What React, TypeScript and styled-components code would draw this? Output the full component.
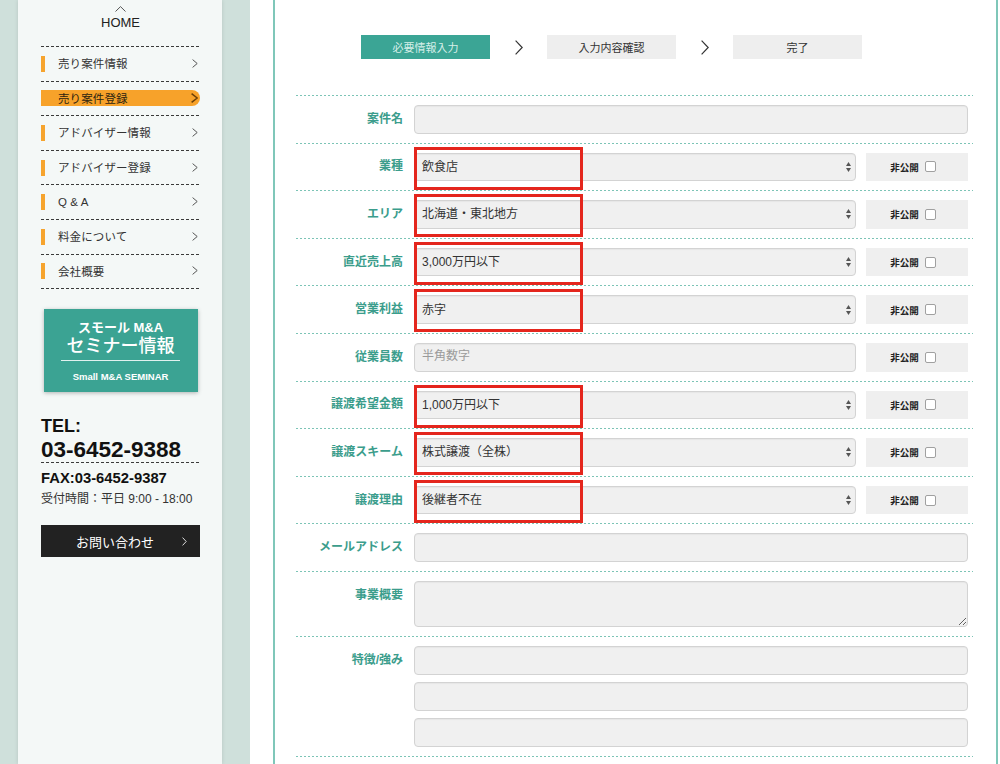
import React from 'react';
import styled, { createGlobalStyle, css } from 'styled-components';

const FONT = `"Liberation Sans", "Noto Sans CJK JP", sans-serif`;

const GlobalStyle = createGlobalStyle`
  *, *::before, *::after { box-sizing: border-box; }
  html, body { margin: 0; padding: 0; }
  body { background: #cfe0db; font-family: ${FONT}; color: #333; }
`;

const dashed = (color: string, dash: number, gap: number, pos: 'top' | 'bottom') => css`
  background-image: repeating-linear-gradient(to right, ${color} 0 ${dash}px, transparent ${dash}px ${dash + gap}px);
  background-size: 100% 1px;
  background-position: ${pos} left;
  background-repeat: no-repeat;
`;

const Page = styled.div`
  display: flex;
  min-height: 100vh;
  padding-left: 18px;
  gap: 28px;
`;

/* ---------- Sidebar ---------- */
const Sidebar = styled.aside`
  flex: 0 0 204px;
  background: #f4f8f7;
  box-shadow: 0 0 4px rgba(0, 0, 0, 0.12);
  padding: 6px 22px 0 23px;
  display: flex;
  flex-direction: column;
`;

const HomeLink = styled.a`
  display: flex;
  flex-direction: column;
  align-items: center;
  color: #222;
  font-size: 13px;
  line-height: 15px;
  text-decoration: none;
  svg { display: block; margin-bottom: 3px; }
`;

const Menu = styled.ul`
  list-style: none;
  margin: 16px 0 0;
  padding: 1px 0 0;
  ${dashed('#3a3a3a', 3, 2, 'top')}
`;

const MenuItem = styled.li`
  height: 34.6px;
  padding-bottom: 1px;
  display: flex;
  align-items: center;
  ${dashed('#3a3a3a', 3, 2, 'bottom')}
`;

const MenuLink = styled.a<{ $active?: boolean }>`
  flex: 1;
  height: 16px;
  display: flex;
  align-items: center;
  border-left: 4px solid #f6a42e;
  padding: 0 2px 1px 13px;
  font-size: 11.5px;
  color: #333;
  text-decoration: none;
  letter-spacing: 0.1px;
  svg { margin-left: auto; display: block; }
  ${(p) =>
    p.$active &&
    css`
      background: #f7a22a;
      border-left-color: #f7a22a;
      border-radius: 0 8px 8px 0;
      color: #2e2410;
    `}
`;

const SeminarBanner = styled.a`
  margin: 20px auto 0;
  width: 154px;
  height: 83px;
  background: #3ba393;
  box-shadow: 0 1px 4px rgba(0, 0, 0, 0.28);
  display: flex;
  flex-direction: column;
  align-items: center;
  padding-top: 11px;
  color: #fff;
  text-decoration: none;
`;

const BannerSub = styled.span`
  font-size: 13px;
  line-height: 15px;
  font-weight: 700;
`;

const BannerTitle = styled.span`
  font-size: 18px;
  line-height: 22px;
  font-weight: 500;
`;

const BannerRule = styled.span`
  display: block;
  width: 119px;
  height: 1px;
  margin-top: 3px;
  background: rgba(255, 255, 255, 0.85);
`;

const BannerEn = styled.span`
  margin-top: 9px;
  font-size: 9.5px;
  line-height: 13px;
  font-weight: 700;
`;

const TelLabel = styled.div`
  margin-top: 24px;
  font-size: 18px;
  line-height: 20px;
  font-weight: 700;
  color: #111;
`;

const TelNumber = styled.div`
  margin-top: 2px;
  font-size: 22.5px;
  line-height: 24px;
  font-weight: 700;
  color: #111;
  padding-bottom: 1px;
  ${dashed('#3a3a3a', 3, 2, 'bottom')}
`;

const Fax = styled.div`
  margin-top: 6px;
  font-size: 14.8px;
  line-height: 18px;
  font-weight: 700;
  color: #111;
`;

const Hours = styled.div`
  margin-top: 3px;
  font-size: 12px;
  line-height: 18px;
  color: #333;
`;

const ContactButton = styled.a`
  margin-top: 17px;
  height: 32px;
  background: #222;
  color: #fff;
  display: grid;
  grid-template-columns: 1fr 6px;
  align-items: center;
  padding: 0 12px 0 7px;
  font-size: 13px;
  text-align: center;
  text-decoration: none;
  svg { display: block; }
`;

/* ---------- Main ---------- */
const Main = styled.main`
  flex: 1;
  background: #fff;
  padding: 0 2px 0 23px;
  display: flex;
`;

const ContentBox = styled.div`
  flex: 1;
  border-left: 2px solid #7fc7b9;
  border-right: 2px solid #7fc7b9;
  padding: 35px 23px 0 21px;
`;

const Steps = styled.ol`
  list-style: none;
  margin: 0;
  padding: 0 0 0 65px;
  display: flex;
  align-items: center;
`;

const Step = styled.li<{ $current?: boolean }>`
  width: 129px;
  height: 24px;
  display: flex;
  align-items: center;
  justify-content: center;
  padding-bottom: 1px;
  font-size: 11px;
  background: ${(p) => (p.$current ? '#3ba595' : '#eeeeee')};
  color: ${(p) => (p.$current ? '#d6efe9' : '#333')};
`;

const StepArrow = styled.li`
  width: 57px;
  display: flex;
  justify-content: center;
  svg { display: block; }
`;

const Form = styled.form`
  margin: 36px 0 0;
  padding-bottom: 1px;
  ${dashed('#7cc4b6', 2, 2, 'bottom')}
`;

const Row = styled.div`
  display: grid;
  grid-template-columns: 107px 1fr;
  column-gap: 11px;
  padding: 10px 5px 9px 0;
  ${dashed('#7cc4b6', 2, 2, 'top')}
`;

const Label = styled.label`
  height: 28.6px;
  display: flex;
  align-items: center;
  justify-content: flex-end;
  padding-bottom: 4px;
  font-size: 12px;
  font-weight: 700;
  color: #3b9d8c;
  white-space: nowrap;
`;

const Field = styled.div`
  position: relative;
  display: flex;
  gap: 10px;
`;

const Stack = styled.div`
  flex: 1;
  display: flex;
  flex-direction: column;
  gap: 7.5px;
`;

const controlBase = css`
  height: 28.6px;
  flex: none;
  background: #f0f0f0;
  border: 1px solid #d3d3d3;
  border-radius: 4px;
  box-shadow: inset 0 1px 1px rgba(0, 0, 0, 0.04);
  font-family: ${FONT};
  font-size: 12px;
  color: #333;
  margin: 0;
  outline: none;
`;

const TextInput = styled.input`
  ${controlBase}
  flex: 1 1 auto;
  width: 100%;
  min-width: 0;
  padding: 0 7px 3px;
  &::placeholder { color: #9a9a9a; }
`;

const SelectBox = styled.div`
  ${controlBase}
  flex: 1;
  display: flex;
  align-items: center;
  justify-content: space-between;
  padding: 0 4px 3px 7px;
  svg { display: block; margin-top: 3px; }
`;

const TextArea = styled.textarea`
  ${controlBase}
  display: block;
  width: 100%;
  height: 46px;
  padding: 6px 7px;
`;

const PrivateBox = styled.div`
  flex: 0 0 102px;
  height: 28.6px;
  background: #efefef;
  display: flex;
  align-items: center;
  justify-content: center;
  gap: 6px;
  padding-right: 8px;
  font-size: 9.5px;
  font-weight: 700;
  color: #222;
`;

const CheckBox = styled.span`
  width: 11px;
  height: 11px;
  border: 1px solid #a0a0a0;
  border-radius: 2px;
  background: #fff;
`;

const Highlight = styled.span`
  position: absolute;
  top: -6px;
  left: 0;
  width: 169px;
  height: 43px;
  border: 3px solid #e4261d;
  pointer-events: none;
`;

/* ---------- Icons ---------- */
const Chevron = ({ color = '#555', w = 6, h = 9, sw = 1 }: { color?: string; w?: number; h?: number; sw?: number }) => (
  <svg width={w} height={h} viewBox={`0 0 ${w} ${h}`}>
    <polyline
      points={`0.6,0.6 ${w - 0.8},${h / 2} 0.6,${h - 0.6}`}
      fill="none"
      stroke={color}
      strokeWidth={sw}
    />
  </svg>
);

const CaretUp = () => (
  <svg width="11" height="6" viewBox="0 0 11 6">
    <polyline points="0.5,5.5 5.5,0.6 10.5,5.5" fill="none" stroke="#555" strokeWidth="1" />
  </svg>
);

const SelectArrows = () => (
  <svg width="5" height="10" viewBox="0 0 5 10">
    <path d="M2.5 0 L5 4 H0 Z M2.5 10 L5 6 H0 Z" fill="#555" />
  </svg>
);

/* ---------- Data ---------- */
type Kind = 'text' | 'select' | 'textarea' | 'multi';
interface FieldDef {
  label: string;
  kind: Kind;
  value?: string;
  placeholder?: string;
  isPrivate?: boolean;
  highlight?: boolean;
}

const fields: FieldDef[] = [
  { label: '案件名', kind: 'text' },
  { label: '業種', kind: 'select', value: '飲食店', isPrivate: true, highlight: true },
  { label: 'エリア', kind: 'select', value: '北海道・東北地方', isPrivate: true, highlight: true },
  { label: '直近売上高', kind: 'select', value: '3,000万円以下', isPrivate: true, highlight: true },
  { label: '営業利益', kind: 'select', value: '赤字', isPrivate: true, highlight: true },
  { label: '従業員数', kind: 'text', placeholder: '半角数字', isPrivate: true },
  { label: '譲渡希望金額', kind: 'select', value: '1,000万円以下', isPrivate: true, highlight: true },
  { label: '譲渡スキーム', kind: 'select', value: '株式譲渡（全株）', isPrivate: true, highlight: true },
  { label: '譲渡理由', kind: 'select', value: '後継者不在', isPrivate: true, highlight: true },
  { label: 'メールアドレス', kind: 'text' },
  { label: '事業概要', kind: 'textarea' },
  { label: '特徴/強み', kind: 'multi' },
];

const menu = [
  { label: '売り案件情報' },
  { label: '売り案件登録', active: true },
  { label: 'アドバイザー情報' },
  { label: 'アドバイザー登録' },
  { label: 'Q & A' },
  { label: '料金について' },
  { label: '会社概要' },
];

const renderControl = (f: FieldDef) => {
  switch (f.kind) {
    case 'select':
      return (
        <SelectBox>
          <span>{f.value}</span>
          <SelectArrows />
        </SelectBox>
      );
    case 'textarea':
      return <TextArea />;
    case 'multi':
      return (
        <Stack>
          <TextInput />
          <TextInput />
          <TextInput />
        </Stack>
      );
    default:
      return <TextInput placeholder={f.placeholder} />;
  }
};

export default function App() {
  return (
    <>
      <GlobalStyle />
      <Page>
        <Sidebar>
          <HomeLink href="#">
            <CaretUp />
            HOME
          </HomeLink>
          <Menu>
            {menu.map((m) => (
              <MenuItem key={m.label}>
                <MenuLink href="#" $active={m.active}>
                  {m.label}
                  {m.active ? <Chevron color="#6b3f08" w={7} h={10} sw={1.5} /> : <Chevron />}
                </MenuLink>
              </MenuItem>
            ))}
          </Menu>
          <SeminarBanner href="#">
            <BannerSub>スモール M&amp;A</BannerSub>
            <BannerTitle>セミナー情報</BannerTitle>
            <BannerRule />
            <BannerEn>Small M&amp;A SEMINAR</BannerEn>
          </SeminarBanner>
          <TelLabel>TEL:</TelLabel>
          <TelNumber>03-6452-9388</TelNumber>
          <Fax>FAX:03-6452-9387</Fax>
          <Hours>受付時間：平日 9:00 - 18:00</Hours>
          <ContactButton href="#">
            <span>お問い合わせ</span>
            <Chevron color="#ddd" w={5} h={9} sw={1} />
          </ContactButton>
        </Sidebar>
        <Main>
          <ContentBox>
            <Steps>
              <Step $current>必要情報入力</Step>
              <StepArrow>
                <Chevron color="#333" w={8} h={15} sw={1.2} />
              </StepArrow>
              <Step>入力内容確認</Step>
              <StepArrow>
                <Chevron color="#333" w={8} h={15} sw={1.2} />
              </StepArrow>
              <Step>完了</Step>
            </Steps>
            <Form onSubmit={(e) => e.preventDefault()}>
              {fields.map((f) => (
                <Row key={f.label}>
                  <Label>{f.label}</Label>
                  <Field>
                    {renderControl(f)}
                    {f.isPrivate && (
                      <PrivateBox>
                        非公開
                        <CheckBox />
                      </PrivateBox>
                    )}
                    {f.highlight && <Highlight />}
                  </Field>
                </Row>
              ))}
            </Form>
          </ContentBox>
        </Main>
      </Page>
    </>
  );
}
